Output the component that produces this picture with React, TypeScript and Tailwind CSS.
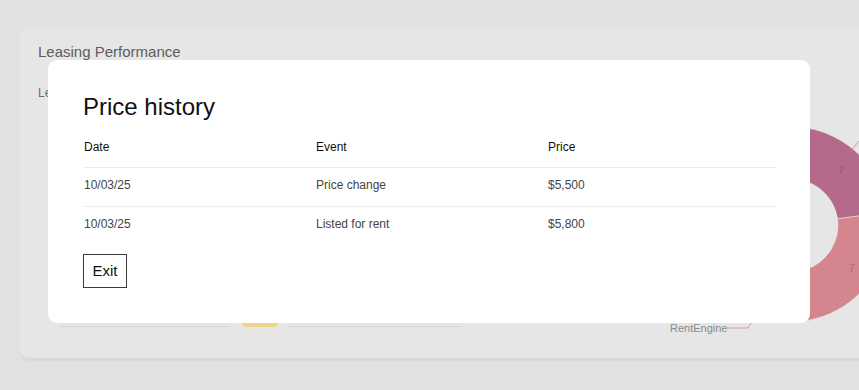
import React from 'react';

const rows = [
  { date: '10/03/25', event: 'Price change', price: '$5,500' },
  { date: '10/03/25', event: 'Listed for rent', price: '$5,800' },
];

const DonutChart = () => (
  <svg width="260" height="230" viewBox="0 0 260 230" className="shrink-0 mt-[30px]">
    <path
      d="M55.5 126.8 A97 97 0 1 1 247.1 97.2 L197.6 103.8 A47 47 0 1 0 104.7 118.2 Z"
      fill="#b5698b"
      stroke="#e6e6e6"
      strokeWidth="0.6"
    />
    <path
      d="M247.1 97.2 A97 97 0 0 1 67 158.5 L110.3 133.5 A47 47 0 0 0 197.6 103.8 Z"
      fill="#d4858e"
      stroke="#e6e6e6"
      strokeWidth="0.6"
    />
    <text x="198" y="59" fontSize="10" fill="#8e5a72" fontFamily="Liberation Sans, Arial, sans-serif">7</text>
    <text x="209" y="157" fontSize="10" fill="#a86a72" fontFamily="Liberation Sans, Arial, sans-serif">7</text>
    <polyline points="210,37 219,26" fill="none" stroke="#c0849c" strokeWidth="0.8" />
    <text x="30" y="217" fontSize="11" fill="#8a8a8a" fontFamily="Liberation Sans, Arial, sans-serif">RentEngine</text>
    <polyline points="86,213 108,213 112,207" fill="none" stroke="#d99aa0" strokeWidth="1" />
  </svg>
);

const PriceHistoryModal = () => (
  <div className="absolute left-[48px] top-[60px] w-[762px] h-[263px] bg-white rounded-[9px] pl-[35px] pr-[34px] pt-[31px]">
    <h2 className="text-[24px] leading-8 text-[#111] mb-[6px]">Price history</h2>
    <div className="w-[693px]">
      <div className="grid grid-cols-[232px_232px_1fr] pt-[10px] pb-[12px] pl-px text-[12px] leading-4 font-medium text-[#111]">
        <span>Date</span>
        <span>Event</span>
        <span>Price</span>
      </div>
      {rows.map((r, i) => (
        <div
          key={i}
          className="grid grid-cols-[232px_232px_1fr] border-t border-[#ececec] pt-[9px] pb-[13px] pl-px text-[12px] leading-4 text-[#444]"
        >
          <span>{r.date}</span>
          <span>{r.event}</span>
          <span>{r.price}</span>
        </div>
      ))}
    </div>
    <button className="mt-[9px] w-[44px] h-[34px] border border-[#3a3a3a] text-[15px] text-[#111] flex items-center justify-center">
      Exit
    </button>
  </div>
);

export default function App() {
  return (
    <div className="relative w-full h-[390px] overflow-hidden bg-[#e1e1e1] font-['Liberation_Sans',Arial,sans-serif]">
      <div className="ml-5 mt-[27px] w-[900px] h-[331px] bg-[#e6e6e6] rounded-[9px] shadow-[0_4px_2px_-1px_rgba(0,0,0,0.04)] pt-[15px] px-[18px]">
        <h1 className="text-[15px] leading-5 text-[#5c5c5c]">Leasing Performance</h1>
        <div className="flex mt-[23px]">
          <div className="w-[602px] shrink-0 flex flex-col">
            <p className="text-[12px] leading-4 text-[#6a6a6a]">Leads by source</p>
            <div className="flex items-start mt-[222px]">
              <div className="ml-[22px] mt-[3px] w-[170px] h-px bg-[#d6d6d6]" />
              <div className="ml-[12px] w-[36px] h-[4px] rounded-b bg-[#ecd48c]" />
              <div className="ml-[10px] mt-[3px] w-[174px] h-px bg-[#d6d6d6]" />
            </div>
          </div>
          <DonutChart />
        </div>
      </div>
      <PriceHistoryModal />
    </div>
  );
}
